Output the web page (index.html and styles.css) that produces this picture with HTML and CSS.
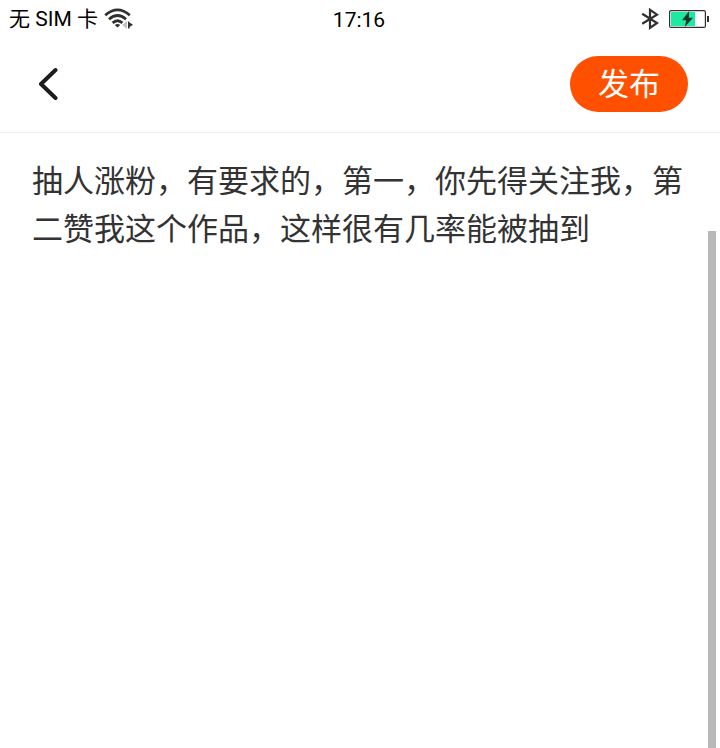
FILE: index.html
```html
<!DOCTYPE html>
<html lang="zh-CN">
<head>
<meta charset="utf-8">
<meta name="viewport" content="width=device-width, initial-scale=1">
<title>发布</title>
<link rel="stylesheet" href="styles.css">
</head>
<body>
<div class="status">
  <div class="carrier">
    <span>无 SIM 卡</span>
    <svg class="wifi" width="30" height="22" viewBox="0 0 30 22" aria-hidden="true">
      <g fill="none" stroke="#303030" stroke-width="2.8">
        <path d="M1.2 7.2Q13.5-3.4 25.8 7.2"/>
        <path d="M5 11.2Q13.5 3.8 22 11.2"/>
        <path d="M8.6 14.9Q13.5 10.6 18.4 14.9"/>
      </g>
      <path d="M10.8 17Q13.5 14.9 16.2 17L13.5 19.6Z" fill="#303030"/>
      <path d="M23 12.8V21L18 17Z" fill="#c4c4c4"/>
      <path d="M24 13V20.5H25.6V18.9L29 16.7L25.6 14.6Z" fill="#303030"/>
    </svg>
  </div>
  <time class="clock">17:16</time>
  <div class="indicators">
    <svg width="18" height="22" viewBox="0 0 18 22" aria-hidden="true">
      <path d="M1.2 5.8L16 15L9 19.8V1.8L16 6.6L1.2 15.8" fill="none" stroke="#303030" stroke-width="2.2"/>
    </svg>
    <svg width="40" height="20" viewBox="0 0 40 20" aria-hidden="true">
      <rect x=".6" y="1.6" width="35.8" height="16.8" rx="1.5" fill="#fff" stroke="#303030" stroke-width="1.2"/>
      <rect x="2" y="3" width="24" height="14" fill="#1de9a0"/>
      <rect x="38" y="7" width="2" height="6" fill="#303030"/>
      <path d="M20.2 2L13 11.2H17.2L15.8 18L24 8.8H19.8Z" fill="#14352a"/>
    </svg>
  </div>
</div>
<header class="bar">
  <button class="back" type="button" aria-label="返回">
    <svg width="20" height="34" viewBox="0 0 20 34" aria-hidden="true">
      <path d="M17.5 3L3 17L17.5 31" fill="none" stroke="#1d1d1f" stroke-width="4" stroke-linecap="round" stroke-linejoin="round"/>
    </svg>
  </button>
  <button class="publish" type="button">发布</button>
</header>
<main class="editor">
  <textarea class="content" aria-label="正文">抽人涨粉，有要求的，第一，你先得关注我，第二赞我这个作品，这样很有几率能被抽到</textarea>
  <div class="scroll-thumb"></div>
</main>
</body>
</html>
```
FILE: styles.css
```css
* {
  box-sizing: border-box;
}

body {
  margin: 0;
  min-height: 100vh;
  display: flex;
  flex-direction: column;
  background: #fff;
  font-family: Roboto, "Noto Sans CJK SC", sans-serif;
}

.status {
  display: grid;
  grid-template-columns: 1fr auto 1fr;
  align-items: center;
  height: 36px;
  padding: 0 11px 0 9px;
  font-size: 21px;
  line-height: 36px;
  color: #000;
}

.carrier,
.indicators {
  display: flex;
  align-items: center;
}

.carrier {
  gap: 6px;
}

.indicators {
  justify-content: flex-end;
  gap: 10px;
}

.clock {
  padding-top: 2px;
}

.bar {
  display: flex;
  align-items: center;
  justify-content: space-between;
  padding: 20px 32px;
  border-bottom: 1px solid #ededed;
}

button {
  border: 0;
  cursor: pointer;
}

.back {
  display: flex;
  padding: 8px 6px;
  background: none;
}

.publish {
  height: 56px;
  padding: 0 28px 4px;
  border-radius: 28px;
  background: #ff5000;
  color: #fff;
  font-family: "Noto Sans CJK SC", sans-serif;
  font-size: 31px;
  line-height: 52px;
}

.editor {
  position: relative;
  flex: 1;
  display: flex;
}

.content {
  flex: 1;
  padding: 22px 32px;
  border: 0;
  outline: 0;
  resize: none;
  overflow: hidden;
  background: none;
  color: #333;
  font-family: "Noto Sans CJK SC", sans-serif;
  font-size: 31px;
  line-height: 48px;
}

.scroll-thumb {
  position: absolute;
  top: 16%;
  right: 4px;
  bottom: 0;
  width: 8px;
  background: #b8b8b8;
}
```
